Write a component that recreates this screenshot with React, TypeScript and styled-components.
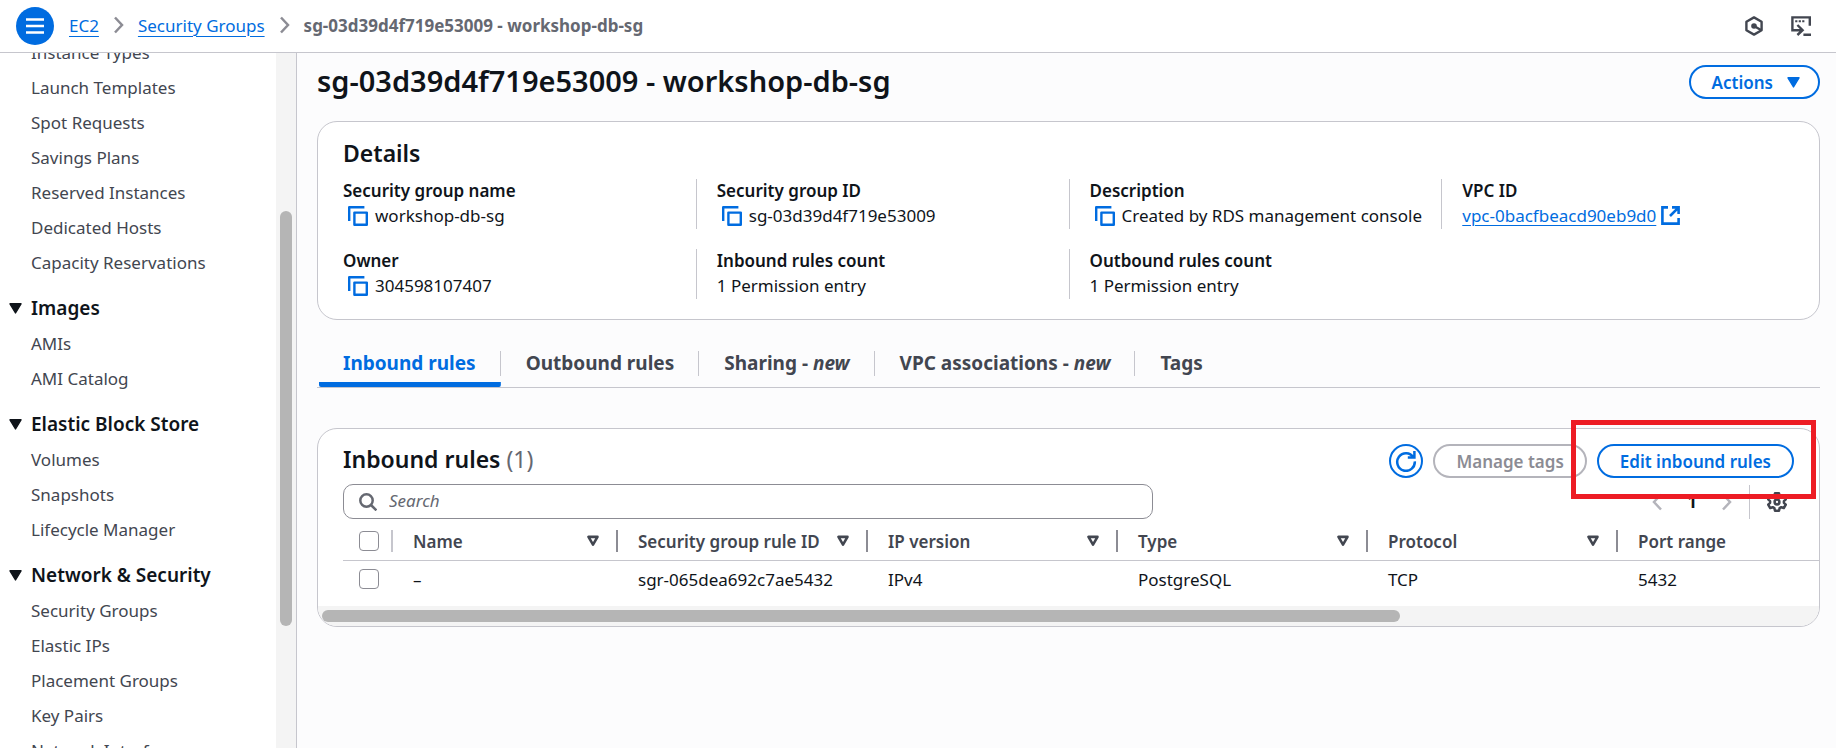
import React from 'react';
import styled, { createGlobalStyle } from 'styled-components';

const color = {
  blue: '#006ce0',
  text: '#0f141a',
  body: '#424650',
  muted: '#656871',
  border: '#c6c6cd',
  control: '#8c8c94',
  disabled: '#b4b4bb',
  track: '#f4f4f4',
  thumb: '#b5b5b5',
};

const GlobalStyle = createGlobalStyle`
  *, *::before, *::after { box-sizing: border-box; }
  body {
    margin: 0;
    background: #fcfcfd;
    color: ${color.text};
    font-family: "Noto Sans", "Open Sans", sans-serif;
    font-size: 17px;
    line-height: 25px;
  }
  h1, h2, ul, ol, dl, dt, dd { margin: 0; padding: 0; }
  ul, ol { list-style: none; }
  button, input { font: inherit; }
  button { cursor: pointer; }
  svg { display: block; flex: none; fill: none; stroke: currentColor; }
`;

/* ---------- shell ---------- */

const Shell = styled.div`
  display: flex;
  flex-direction: column;
  height: 100vh;
`;

const TopBar = styled.header`
  display: flex;
  align-items: center;
  flex: none;
  padding: 7px 25px 7px 16px;
  background: #fff;
  border-bottom: 1px solid ${color.border};
`;

const MenuButton = styled.button`
  display: grid;
  place-items: center;
  width: 38px;
  height: 38px;
  margin-right: 15px;
  padding: 0;
  border: 0;
  border-radius: 50%;
  background: ${color.blue};
  color: #fff;
`;

const Crumbs = styled.ol`
  display: flex;
  flex: 1;
  padding-bottom: 2px;
`;

const Crumb = styled.li`
  display: flex;
  align-items: center;
  white-space: nowrap;
  color: ${color.muted};
  font-weight: ${(p: { $current?: boolean }) => (p.$current ? 700 : 400)};

  svg {
    margin: 0 14px 0 15px;
    color: ${color.control};
  }
`;

const Link = styled.a`
  color: ${color.blue};
  text-decoration: underline;
  text-decoration-thickness: 1px;
  text-underline-offset: 4px;
`;

const TopTools = styled.div`
  display: flex;
  gap: 27px;
`;

const IconButton = styled.button`
  display: block;
  padding: 0;
  border: 0;
  background: none;
  color: ${color.body};
`;

const Body = styled.div`
  display: flex;
  flex: 1;
  min-height: 0;
`;

/* ---------- side navigation ---------- */

const Side = styled.aside`
  display: flex;
  flex: none;
  width: 297px;
  background: #fff;
  border-right: 1px solid ${color.border};
`;

const SideNav = styled.nav`
  flex: 1;
  overflow: hidden;
`;

const ScrolledContent = styled.div`
  margin-top: -18px;
`;

const SideTrack = styled.div`
  display: flex;
  flex-direction: column;
  width: 20px;
  padding: 0 4px;
  background: ${color.track};

  &::before { content: ''; flex: 158; }
  &::after { content: ''; flex: 122; }
`;

const SideThumb = styled.div`
  flex: 415;
  border-radius: 6px;
  background: ${color.thumb};
`;

const SectionToggle = styled.button`
  display: flex;
  align-items: center;
  gap: 9px;
  width: 100%;
  height: 36px;
  margin-top: 10px;
  padding: 0 0 0 9px;
  border: 0;
  background: none;
  color: ${color.text};
  font-size: 19px;
  font-weight: 600;
  text-align: left;
`;

const NavLink = styled.a`
  display: block;
  padding: 5px 0 5px 31px;
  color: ${color.body};
  text-decoration: none;
`;

/* ---------- main column ---------- */

const Main = styled.main`
  flex: 1;
  min-width: 0;
  padding: 12px 16px 0 20px;
`;

const TitleRow = styled.div`
  display: flex;
  align-items: flex-start;
  justify-content: space-between;
  height: 34px;
  margin-bottom: 22px;
`;

const Title = styled.h1`
  font-size: 29px;
  font-weight: 600;
  line-height: 32px;
`;

const Heading = styled.h2`
  font-size: 23px;
  font-weight: 600;
  line-height: 30px;
`;

const Count = styled.span`
  color: ${color.muted};
  font-weight: 400;
`;

const PillButton = styled.button`
  display: flex;
  align-items: center;
  gap: 14px;
  height: 34px;
  padding: 0 21px;
  border: 2px solid ${color.blue};
  border-radius: 17px;
  background: #fff;
  color: ${color.blue};
  font-weight: 600;
  white-space: nowrap;

  svg { margin-right: -3px; }

  &:disabled {
    border-color: ${color.disabled};
    color: ${color.control};
    cursor: default;
  }
`;

const RoundButton = styled.button`
  display: grid;
  place-items: center;
  width: 34px;
  height: 34px;
  padding: 0;
  border: 2px solid ${color.blue};
  border-radius: 50%;
  background: #fff;
  color: ${color.blue};
`;

const Card = styled.section`
  border: 1px solid ${color.border};
  border-radius: 20px;
  background: #fff;
`;

const DetailsCard = styled(Card)`
  padding: 16px 25px 20px;
`;

const DetailsGrid = styled.dl`
  display: grid;
  grid-template-columns: calc(25% - 30px) repeat(3, 1fr);
  gap: 20px;
  margin-top: 11px;
`;

const Detail = styled.div`
  min-width: 0;
  padding-left: ${(p: { $first?: boolean }) => (p.$first ? 0 : 20)}px;
  border-left: ${(p) => (p.$first ? '0' : `1px solid ${color.border}`)};
  white-space: nowrap;
`;

const Term = styled.dt`
  padding-bottom: 1px;
  font-weight: 600;
  line-height: 23px;
`;

const Value = styled.dd`
  display: flex;
  align-items: center;
  padding-bottom: 1px;
`;

const CopyButton = styled(IconButton)`
  margin: 0 7px 0 5px;
  color: ${color.blue};
`;

const ExternalLink = styled(Link)`
  display: flex;
  align-items: center;
  gap: 5px;
  text-underline-offset: 3px;
`;

/* ---------- tabs ---------- */

const Tabs = styled.div`
  display: flex;
  gap: 1px;
  margin: 31px 0 40px;
  padding-left: 2px;
  border-bottom: 1px solid ${color.border};
`;

const Tab = styled.button`
  padding: 0 0 6px;
  border: 0;
  border-bottom: 5px solid transparent;
  background: none;
  color: ${color.body};
  font-size: 19px;
  font-weight: 700;
  white-space: nowrap;

  span {
    display: block;
    padding: 0 24px;
    border-right: 1px solid ${color.border};
  }

  &:last-child span { border-right: 0; }

  &[aria-selected='true'] {
    color: ${color.blue};
    background: linear-gradient(${color.blue}, ${color.blue}) border-box bottom / 100% 5px no-repeat;
    border-radius: 2px;
  }
`;

/* ---------- rules card ---------- */

const RulesHead = styled.div`
  display: flex;
  align-items: flex-start;
  justify-content: space-between;
  padding: 15px 25px 6px;
`;

const Actions = styled.div`
  display: flex;
  gap: 10px;
`;

const Highlighted = styled.div`
  position: relative;

  &::after {
    content: '';
    position: absolute;
    inset: -24px -22px -21px -26px;
    border: 5px solid #ed1c24;
    pointer-events: none;
    z-index: 1;
  }
`;

const FilterRow = styled.div`
  display: flex;
  align-items: center;
  justify-content: space-between;
  gap: 24px;
  padding: 0 32px 0 25px;
`;

const SearchBox = styled.label`
  display: flex;
  align-items: center;
  flex: 1;
  max-width: 810px;
  height: 35px;
  padding: 0 15px;
  gap: 12px;
  border: 1px solid ${color.control};
  border-radius: 10px;
  color: ${color.muted};
`;

const SearchInput = styled.input`
  flex: 1;
  min-width: 0;
  padding: 0 0 2px;
  border: 0;
  outline: 0;
  background: none;
  color: ${color.text};

  &::placeholder {
    color: ${color.muted};
    font-style: italic;
    opacity: 1;
  }
`;

const Pager = styled.div`
  display: flex;
  align-items: center;
  height: 34px;
`;

const PageArrow = styled(IconButton)`
  color: ${color.disabled};
`;

const PageNumber = styled(IconButton)`
  width: 60px;
  color: ${color.text};
  font-weight: 700;
`;

const PagerDivider = styled.div`
  align-self: stretch;
  width: 1px;
  margin: 0 17px;
  background: ${color.border};
`;

const TableClip = styled.div`
  overflow: hidden;
  padding-left: 25px;
`;

const Table = styled.table`
  width: 100%;
  min-width: 1400px;
  table-layout: fixed;
  border-spacing: 0;
  text-align: left;
  white-space: nowrap;
`;

const Th = styled.th`
  width: ${(p: { $width?: number }) => (p.$width ? `${p.$width}px` : 'auto')};
  padding: 11px 0 8px;
  border-bottom: 1px solid ${color.border};
  color: ${color.body};
  font-weight: 600;
`;

const HeadCell = styled.div`
  display: flex;
  align-items: center;
  justify-content: space-between;
  height: 22px;
  padding: 0 17px 0 20px;
  border-right: 2px solid ${color.control};

  ${Th}:last-child & { border-right: 0; }
`;

const CheckCell = styled.div`
  display: flex;
  align-items: center;
  height: 22px;
  padding-left: 16px;
  border-right: 2px solid ${(p: { $divider?: boolean }) => (p.$divider ? color.border : 'transparent')};
`;

const Td = styled.td`
  padding: 7px 0 13px;
  vertical-align: top;
`;

const CellText = styled.div`
  padding: 0 0 2px 20px;
  line-height: 23px;
`;

const Checkbox = styled.input`
  appearance: none;
  width: 20px;
  height: 20px;
  margin: 0;
  border: 1px solid ${color.control};
  border-radius: 4px;
  background: #fff;
`;

const TableTrack = styled.div`
  height: 20px;
  padding: 4px 0 4px 4px;
  border-radius: 0 0 19px 19px;
  background: ${color.track};
`;

const TableThumb = styled.div`
  width: 72%;
  height: 12px;
  border-radius: 6px;
  background: ${color.thumb};
`;

/* ---------- icons ---------- */

const MenuIcon = () => (
  <svg width="18" height="18" strokeWidth="2.4"><path d="M0 2.5h18M0 9h18M0 15.5h18" /></svg>
);
const ChevronRight = () => (
  <svg width="10" height="18" strokeWidth="2.5"><path d="M1 1.5 8 9l-7 7.5" /></svg>
);
const ChevronLeft = () => (
  <svg width="10" height="18" strokeWidth="2.5"><path d="M9 1.5 2 9l7 7.5" /></svg>
);
const HexIcon = () => (
  <svg width="20" height="20" strokeWidth="2.4" strokeLinejoin="round">
    <path d="M10 1.4 17.6 5.7v8.6L10 18.6 2.4 14.3V5.7z" />
    <path d="M10 10l7.4 4.2" />
    <circle cx="10" cy="10" r="2.8" fill="currentColor" stroke="none" />
  </svg>
);
const ShellIcon = () => (
  <svg width="20" height="20" strokeWidth="2.4">
    <path d="M18.8 9.8V1.4H1.4v12.8h10.2M6.4 9l5.2 5.2-5.2 4.8M12.4 18.7H20" />
    <path d="M4.2 5.2h2.2M7.7 5.2h2.2M11.2 5.2h2.2" strokeWidth="2" />
  </svg>
);
const CaretDown = () => (
  <svg width="13" height="11"><path d="M1 .8h11L6.500 10z" fill="currentColor" strokeWidth="1.4" strokeLinejoin="round" /></svg>
);
const SortIcon = () => (
  <svg width="12" height="12" strokeWidth="2.6" strokeLinejoin="round"><path d="M1.5 1.900h9L6 9.600z" /></svg>
);
const CopyIcon = () => (
  <svg width="20" height="20" strokeWidth="2.4" strokeLinejoin="round">
    <path d="M1.2 15V1.2h15.2" />
    <path d="M6.4 6.6h12.4v12.2H6.4z" />
  </svg>
);
const ExternalIcon = () => (
  <svg width="19" height="19" strokeWidth="2.6">
    <path d="M7 1.4H1.4v16.2h16.2V12M11 1.4h6.6V8M17.4 1.6 9 10" />
  </svg>
);
const RefreshIcon = () => (
  <svg width="22" height="22" strokeWidth="2.5">
    <path d="M18.4 7.2A8.8 8.8 0 1 0 19.8 11.4M19.4 1v6.6h-6.6" />
  </svg>
);
const SearchIcon = () => (
  <svg width="18" height="18" strokeWidth="2.5"><circle cx="7.5" cy="7.5" r="6.2" /><path d="m12 12 5.4 5.4" /></svg>
);
const GearIcon = () => (
  <svg width="20" height="20" strokeWidth="2.5" strokeLinejoin="round">
    <path d="M8 1.3h4l.6 2.5 1.7 1 2.5-.8 2 3.4-1.9 1.8v1.6l1.9 1.8-2 3.4-2.5-.8-1.7 1-.6 2.5H8l-.6-2.5-1.7-1-2.5.8-2-3.400 1.900-1.800V9.200L1.200 7.400l2-3.400 2.500.8 1.700-1z" />
    <circle cx="10" cy="10" r="2.4" />
  </svg>
);

/* ---------- data ---------- */

const topLinks = [
  'Instance Types',
  'Launch Templates',
  'Spot Requests',
  'Savings Plans',
  'Reserved Instances',
  'Dedicated Hosts',
  'Capacity Reservations',
];

const sections = [
  { title: 'Images', links: ['AMIs', 'AMI Catalog'] },
  { title: 'Elastic Block Store', links: ['Volumes', 'Snapshots', 'Lifecycle Manager'] },
  {
    title: 'Network & Security',
    links: ['Security Groups', 'Elastic IPs', 'Placement Groups', 'Key Pairs', 'Network Interfaces'],
  },
];

const details: { term: string; value: string; kind?: 'copy' | 'link'; first?: boolean }[] = [
  { term: 'Security group name', value: 'workshop-db-sg', kind: 'copy', first: true },
  { term: 'Security group ID', value: 'sg-03d39d4f719e53009', kind: 'copy' },
  { term: 'Description', value: 'Created by RDS management console', kind: 'copy' },
  { term: 'VPC ID', value: 'vpc-0bacfbeacd90eb9d0', kind: 'link' },
  { term: 'Owner', value: '304598107407', kind: 'copy', first: true },
  { term: 'Inbound rules count', value: '1 Permission entry' },
  { term: 'Outbound rules count', value: '1 Permission entry' },
];

const tabs: { label: string; isNew?: boolean }[] = [
  { label: 'Inbound rules' },
  { label: 'Outbound rules' },
  { label: 'Sharing', isNew: true },
  { label: 'VPC associations', isNew: true },
  { label: 'Tags' },
];

const columns: { label: string; width?: number; value: string }[] = [
  { label: 'Name', width: 225, value: '–' },
  { label: 'Security group rule ID', width: 250, value: 'sgr-065dea692c7ae5432' },
  { label: 'IP version', width: 250, value: 'IPv4' },
  { label: 'Type', width: 250, value: 'PostgreSQL' },
  { label: 'Protocol', width: 250, value: 'TCP' },
  { label: 'Port range', value: '5432' },
];

const NavList = ({ links }: { links: string[] }) => (
  <ul>
    {links.map((l) => (
      <li key={l}><NavLink href="#">{l}</NavLink></li>
    ))}
  </ul>
);

export default function App() {
  return (
    <Shell>
      <GlobalStyle />
      <TopBar>
        <MenuButton aria-label="Toggle navigation"><MenuIcon /></MenuButton>
        <Crumbs>
          <Crumb><Link href="#">EC2</Link></Crumb>
          <Crumb><ChevronRight /><Link href="#">Security Groups</Link></Crumb>
          <Crumb $current><ChevronRight />sg-03d39d4f719e53009 - workshop-db-sg</Crumb>
        </Crumbs>
        <TopTools>
          <IconButton aria-label="Assistant"><HexIcon /></IconButton>
          <IconButton aria-label="CloudShell"><ShellIcon /></IconButton>
        </TopTools>
      </TopBar>

      <Body>
        <Side>
          <SideNav>
            <ScrolledContent>
              <NavList links={topLinks} />
              {sections.map((s) => (
                <div key={s.title}>
                  <SectionToggle aria-expanded="true"><CaretDown />{s.title}</SectionToggle>
                  <NavList links={s.links} />
                </div>
              ))}
            </ScrolledContent>
          </SideNav>
          <SideTrack><SideThumb /></SideTrack>
        </Side>

        <Main>
          <TitleRow>
            <Title>sg-03d39d4f719e53009 - workshop-db-sg</Title>
            <PillButton>Actions <CaretDown /></PillButton>
          </TitleRow>

          <DetailsCard>
            <Heading>Details</Heading>
            <DetailsGrid>
              {details.map((d) => (
                <Detail key={d.term} $first={d.first}>
                  <Term>{d.term}</Term>
                  <Value>
                    {d.kind === 'copy' && <CopyButton aria-label={`Copy ${d.term}`}><CopyIcon /></CopyButton>}
                    {d.kind === 'link' ? <ExternalLink href="#">{d.value}<ExternalIcon /></ExternalLink> : d.value}
                  </Value>
                </Detail>
              ))}
            </DetailsGrid>
          </DetailsCard>

          <Tabs role="tablist">
            {tabs.map((t, i) => (
              <Tab key={t.label} role="tab" aria-selected={i === 0}>
                <span>{t.label}{t.isNew && <> - <em>new</em></>}</span>
              </Tab>
            ))}
          </Tabs>

          <Card>
            <RulesHead>
              <Heading>Inbound rules <Count>(1)</Count></Heading>
              <Actions>
                <RoundButton aria-label="Refresh"><RefreshIcon /></RoundButton>
                <PillButton disabled>Manage tags</PillButton>
                <Highlighted><PillButton>Edit inbound rules</PillButton></Highlighted>
              </Actions>
            </RulesHead>
            <FilterRow>
              <SearchBox>
                <SearchIcon />
                <SearchInput type="text" placeholder="Search" aria-label="Search rules" />
              </SearchBox>
              <Pager>
                <PageArrow aria-label="Previous page"><ChevronLeft /></PageArrow>
                <PageNumber>1</PageNumber>
                <PageArrow aria-label="Next page"><ChevronRight /></PageArrow>
                <PagerDivider />
                <IconButton aria-label="Preferences"><GearIcon /></IconButton>
              </Pager>
            </FilterRow>
            <TableClip>
              <Table>
                <thead>
                  <tr>
                    <Th $width={50}>
                      <CheckCell $divider><Checkbox type="checkbox" aria-label="Select all rules" /></CheckCell>
                    </Th>
                    {columns.map((c) => (
                      <Th key={c.label} $width={c.width}>
                        <HeadCell>{c.label}{c.width && <SortIcon />}</HeadCell>
                      </Th>
                    ))}
                  </tr>
                </thead>
                <tbody>
                  <tr>
                    <Td><CheckCell><Checkbox type="checkbox" aria-label="Select rule" /></CheckCell></Td>
                    {columns.map((c) => (
                      <Td key={c.label}><CellText>{c.value}</CellText></Td>
                    ))}
                  </tr>
                </tbody>
              </Table>
            </TableClip>
            <TableTrack><TableThumb /></TableTrack>
          </Card>
        </Main>
      </Body>
    </Shell>
  );
}
